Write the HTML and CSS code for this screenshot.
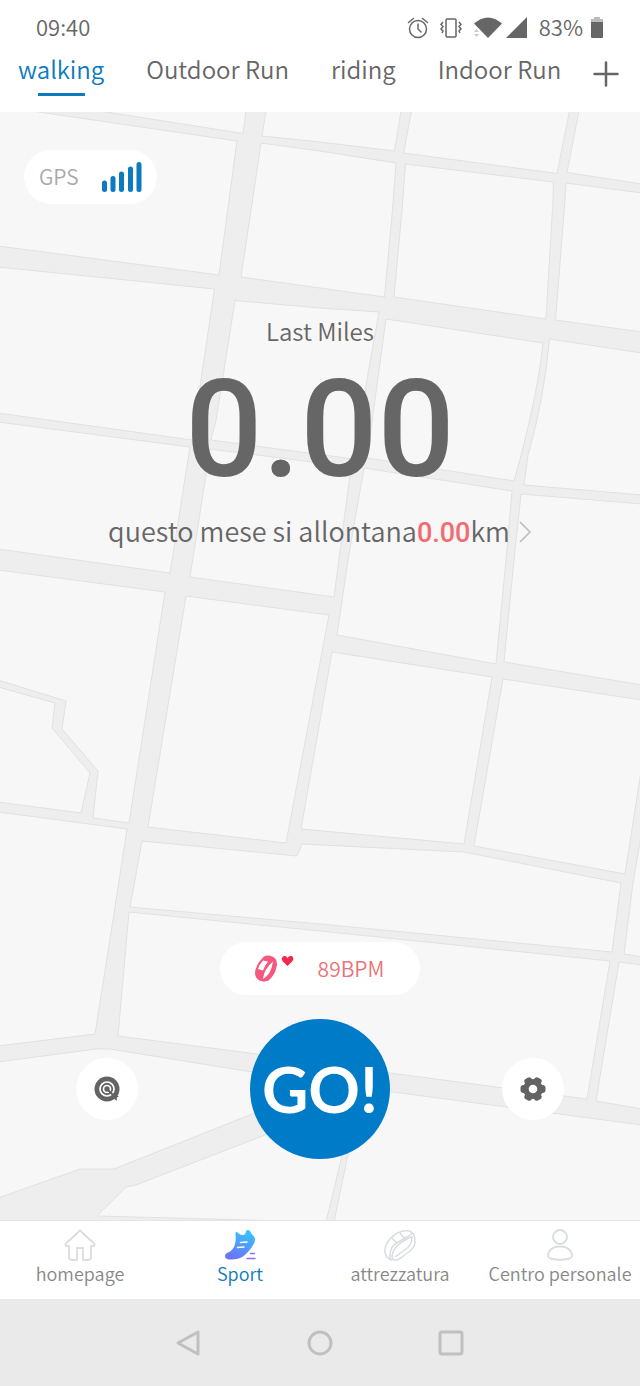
FILE: index.html
```html
<!DOCTYPE html>
<html lang="it">
<head>
<meta charset="utf-8">
<meta name="viewport" content="width=device-width, initial-scale=1">
<title>Sport</title>
<link rel="stylesheet" href="styles.css">
</head>
<body>
<div class="app">
  <header class="top">
    <div class="status">
      <time class="clock">09:40</time>
      <div class="status-icons">
        <svg width="22" height="24" viewBox="0 0 22 24" fill="none" stroke="#666" stroke-width="1.5" stroke-linecap="round"><circle cx="11" cy="13" r="8.5"/><path d="M11 8v5l3 3M1.500 6.500l5-4M20.500 6.500l-5-4"/></svg>
        <svg class="vibrate" width="22" height="24" viewBox="0 0 22 24" fill="none" stroke="#666" stroke-width="1.500"><rect x="6" y="3" width="10" height="18" rx="1"/><path d="M3 6l-2 2.500 2 2-2 2.500 2 2-1 2M19 6l2 2.500-2 2 2 2.500-2 2 1 2"/></svg>
        <svg class="wifi" width="30" height="24" viewBox="0 0 30 24" fill="#666"><path d="M1 7.500Q15-4.500 29 7.500L15 22Z"/><path d="M1 16l2.500-3L6 16zM1 18l2.500 3L6 18z" fill="#ccc"/></svg>
        <svg width="22" height="24" viewBox="0 0 22 24" fill="#666"><path d="M21 1v21H0z"/></svg>
        <span class="percent">83%</span>
        <svg width="14" height="24" viewBox="0 0 14 24"><path d="M4 1h6v2h3v3H1V3h3z" fill="#bbb"/><path d="M1 6h12v15q0 1-1 1H2q-1 0-1-1z" fill="#666"/></svg>
      </div>
    </div>
    <nav class="tabs" aria-label="Attività">
      <div class="tab-list">
        <a class="tab active" href="#walking">walking</a>
        <a class="tab" href="#outdoor">Outdoor Run</a>
        <a class="tab" href="#riding">riding</a>
        <a class="tab" href="#indoor">Indoor Run</a>
      </div>
      <button class="add" aria-label="Aggiungi"><svg width="26" height="26" viewBox="0 0 26 26" fill="none" stroke="#666" stroke-width="2.500" stroke-linecap="round"><path d="M13 1.500v23M1.500 13h23"/></svg></button>
    </nav>
  </header>

  <main class="stage">
    <svg class="map" viewBox="0 112 640 1108" preserveAspectRatio="xMidYMid slice" aria-hidden="true">
      <g fill="#f7f7f7" stroke="#e1e1e1" stroke-width="1">
        <path d="M100 111H246L243 133.500Z"/>
        <path d="M-2 111H32L237 141L229 200L219 275L-2 246Z"/>
        <path d="M266 111H401L394.500 151L320 142L262 136Z"/>
        <path d="M411.500 111H569.500L557 173.500L403.500 153Z"/>
        <path d="M579 111H642V184L567 172.500Z"/>
        <path d="M261 143L320 151L396 163L392.500 210L384.500 297L320 288L241 277L252.500 200Z"/>
        <path d="M405.500 164L553.500 182L553 200L546 319L394 297L402 210Z"/>
        <path d="M566 183L642 193V332L555.500 320L565 200Z"/>
        <path d="M-2 267L214.500 289L192 440L-2 413Z"/>
        <path d="M235 300.500L320 308L379 312L353 459L211 440L216 420Z"/>
        <path d="M386 319L543 343Q537 400 514 481L367 458Z"/>
        <path d="M549.500 339L642 353V495L524 485L528 455Q544 400 549.500 339Z"/>
        <path d="M-2 422L190 447L170 573L-2 549Z"/>
        <path d="M210 449L320 463L351 467L334 597L190 577Z"/>
        <path d="M364 468L512 491L506 560L496 664L337 635L348 560Z"/>
        <path d="M521 494L642 504V685L504 662L514 560Z"/>
        <path d="M-2 570L165 592L129 823L93 818L98 771L62 729L66 701L-2 680Z"/>
        <path d="M-2 687L55 703L52 728L90 773L81 813L-2 802Z"/>
        <path d="M186 596L329 615L286 843L148 827Z"/>
        <path d="M332 652L492 677L464 844L301 829Z"/>
        <path d="M503 679L642 700V765L625 874L474 846Z"/>
        <path d="M-2 812L127 829L113 920L95 1034L-2 1046Z"/>
        <path d="M142 841L297 856L302 844L464 852L621 883L612 952L320 924L130 907Z"/>
        <path d="M642 830L633 883L624 954L642 957Z"/>
        <path d="M129 912L320 931L610 961L587 1099L390 1073L257 1054L118 1036Z"/>
        <path d="M619 962L642 965V1109L596 1101Z"/>
        <path d="M-2 1062L96 1049H110L252 1072L345 1085L340 1082L252 1114L114 1169H80L-2 1198Z"/>
        <path d="M355 1087L642 1125V1222H334L350 1145Z"/>
        <path d="M265 1135L340 1110L342 1156L326 1222L97 1216L126 1187L136 1185Z"/>
      </g>
    </svg>

    <div class="gps">
      <span>GPS</span>
      <svg width="42" height="32" viewBox="0 0 42 32" stroke="#0b7abf" stroke-width="5" stroke-linecap="round"><path d="M3.500 22v6.500M12 17.500v11M20.500 13v15.500M29.500 8v20.500M38 3.500v25"/></svg>
    </div>

    <section class="summary">
      <h1 class="caption">Last Miles</h1>
      <p class="distance">0.00</p>
      <a class="month" href="#history"><span>questo mese si allontana<b class="red">0.00</b>km</span><svg width="14" height="24" viewBox="0 0 14 24" fill="none" stroke="#bbb" stroke-width="1.500"><path d="M2 2l10 10L2 22"/></svg></a>
    </section>

    <section class="controls">
      <div class="pulse">
        <svg width="40" height="30" viewBox="0 0 40 30"><path fill="#f4587f" fill-rule="evenodd" d="M10 2.500Q14 .5 18 2.500Q23 4 23 10Q22 19 17 24Q14 28 9 27.500Q2 26.500 1 20Q1 11 10 2.500ZM9 6.500Q5 11 4 15L9 16.500Q10.500 12 14 7.500ZM19 7.500Q10 15 9 25Q17 21 19 7.500Z"/><path fill="#f6274e" d="M33.500 12L28.500 7Q26.500 3 30 2Q32.500 1.500 33.500 4Q35 1.500 37.500 2Q40.500 3.500 38.500 7Z"/></svg>
        <span>89BPM</span>
      </div>
      <div class="actions">
        <button class="round" aria-label="Obiettivo"><svg width="28" height="28" viewBox="0 0 28 28"><circle cx="14" cy="14" r="12.500" fill="#636363"/><g fill="none" stroke="#fff" stroke-width="1.700"><circle cx="14" cy="14" r="7"/><circle cx="14" cy="14" r="3.500"/></g><path d="M14 14l6 6" stroke="#636363" stroke-width="2"/><path d="M20 20l6 1-2 1.500-.5 3.500-3-3z" fill="#636363"/></svg></button>
        <button class="go">GO!</button>
        <button class="round" aria-label="Impostazioni"><svg width="28" height="28" viewBox="0 0 28 28"><g fill="#636363"><circle cx="14" cy="14" r="10"/><rect x="1.500" y="10" width="25" height="8" rx="3"/><rect x="1.500" y="10" width="25" height="8" rx="3" transform="rotate(60 14 14)"/><rect x="1.500" y="10" width="25" height="8" rx="3" transform="rotate(120 14 14)"/></g><circle cx="14" cy="14" r="4.300" fill="#fff"/></svg></button>
      </div>
    </section>
  </main>

  <nav class="bottom" aria-label="Principale">
    <a class="item" href="#home"><svg width="32" height="32" viewBox="0 0 32 32" fill="none" stroke="#ddd" stroke-width="1.800" stroke-linejoin="round"><path d="M16 1.500L1.500 15Q1 17 3 17H5V28Q5 31 8 31H13V19H19V31H24Q27 31 27 28V17H29Q31 17 30.500 15Z"/></svg><span>homepage</span></a>
    <a class="item current" href="#sport"><svg width="32" height="32" viewBox="0 0 32 32"><defs><linearGradient id="shoe" x1="0.700" y1="0" x2="0.400" y2="1"><stop offset="0" stop-color="#35c5ff"/><stop offset="1" stop-color="#6d73fa"/></linearGradient></defs><path fill="url(#shoe)" d="M11.500 5Q11.500 1 14 4Q17 7 20.500 5.500Q22 4 22 2Q24 0 26 2Q27 5 30 7.500Q32 10 30 14.500Q26 22 19 27.500Q14 31 5 30.500Q1 30 1 27Q1 24.500 4 23.500Q13 20 11.500 5Z"/><path d="M16.500 13.500l6.500-.5M13.500 18.500l6.500-.5" stroke="#fff" stroke-width="1.500" stroke-linecap="round"/><path d="M26.500 24.500h4M23 29.500h8" stroke="#8175ee" stroke-width="1.500" stroke-linecap="round"/></svg><span>Sport</span></a>
    <a class="item" href="#device"><svg width="32" height="32" viewBox="0 0 32 32" fill="none" stroke="#d9dcdf" stroke-width="1.500"><path d="M23 1.500Q13 2 6 10Q-1 18 1.500 25Q3 30 8 31M23 1.500Q28 2 27.500 5Q27 6 21 9L11 15Q5 20 6 30M8 9L13 14M16 4L20 9M28 4Q31 5 31 13Q31 18 25 23L15 30Q9 33 8 28Q8 22 14 16Q23 9 28 8Q28 16 22 20L11 28"/></svg><span>attrezzatura</span></a>
    <a class="item" href="#profile"><svg width="32" height="32" viewBox="0 0 32 32" fill="none" stroke="#d9dcdf" stroke-width="1.800"><circle cx="16" cy="8" r="7"/><path d="M16 17.500Q24 17.500 27 23Q30 29 24 30Q16 31.500 8 30Q2 29 5 23Q8 17.500 16 17.500Z"/></svg><span>Centro personale</span></a>
  </nav>

  <footer class="system">
    <button aria-label="Indietro"><svg width="28" height="28" viewBox="0 0 28 28"><path d="M3 14L23 3V25Z"/></svg></button>
    <button aria-label="Home"><svg width="28" height="28" viewBox="0 0 28 28"><circle cx="14" cy="14" r="11"/></svg></button>
    <button aria-label="Recenti"><svg width="28" height="28" viewBox="0 0 28 28"><rect x="3" y="3" width="22" height="22" rx="2"/></svg></button>
  </footer>
</div>
</body>
</html>
```

FILE: styles.css
```css
* { box-sizing: border-box; }
body { margin: 0; background: #fff; color: #666; font-family: "Noto Sans CJK SC", "Noto Sans", sans-serif; font-weight: 350; }
a { color: inherit; text-decoration: none; }
button { border: 0; padding: 0; background: none; font: inherit; color: inherit; cursor: pointer; }
svg { display: block; flex: none; }
h1, p { margin: 0; font-weight: inherit; }

.app { display: flex; flex-direction: column; min-height: 100vh; }

.top { display: flex; flex-direction: column; height: 112px; background: #fff; }
.status { display: flex; justify-content: space-between; align-items: center; height: 48px; padding: 6px 36px 0; font-size: 22px; line-height: 28px; }
.clock { padding-bottom: 2px; }
.status-icons { display: flex; align-items: center; gap: 11px; }
.status-icons svg { margin-top: 2px; }
.wifi { margin-right: -8px; }
.percent { margin-right: -4px; padding-bottom: 2px; }
.tabs { display: flex; justify-content: space-between; align-items: flex-start; padding: 3px 21px 0 18px; font-size: 24px; line-height: 36px; white-space: nowrap; }
.tab-list { display: flex; gap: 42px; }
.tab { display: flex; flex-direction: column; align-items: center; gap: 6px; }
.tab.active { color: #0b7abf; }
.tab.active::after { content: ""; width: 47px; height: 3px; background: #0b7abf; }
.add { padding-top: 10px; }

.stage { position: relative; flex: 1; display: flex; flex-direction: column; justify-content: space-between; padding: 38px 24px 61px; background: #eee; overflow: hidden; }
.map { position: absolute; inset: 0; width: 100%; height: 100%; }
.gps, .summary, .controls { position: relative; }
.gps { display: flex; align-items: center; align-self: flex-start; gap: 22px; height: 54px; padding: 0 14px 0 15px; border-radius: 27px; background: #fff; color: #aaa; font-size: 21px; }
.gps span, .pulse span { padding-bottom: 2px; }
.summary { display: flex; flex-direction: column; align-items: center; flex: 1; padding-top: 109px; }
.caption { font-size: 24px; line-height: 36px; }
.distance { font: 500 136px/162px Roboto, sans-serif; }
.month { display: flex; align-items: center; gap: 8px; font-size: 27px; line-height: 40px; }
.red { color: #f26b70; font-family: Roboto, sans-serif; font-weight: 500; }
.controls { display: flex; flex-direction: column; align-items: center; gap: 24px; }
.pulse { display: flex; align-items: center; gap: 24px; height: 53px; padding: 0 36px 0 34px; border-radius: 27px; background: #fff; color: #e97478; font-size: 21px; }
.actions { display: flex; justify-content: space-between; align-items: center; align-self: stretch; padding: 0 52px; }
.round { display: grid; place-items: center; width: 62px; height: 62px; border-radius: 50%; background: #fff; }
.go { width: 140px; height: 140px; border-radius: 50%; background: #007bc8; color: #fff; font: 700 64px/1 Lato, sans-serif; }

.bottom { display: grid; grid-template-columns: repeat(4, 1fr); height: 79px; padding-top: 8px; border-top: 1px solid #e4e4e4; background: #fff; }
.item { display: flex; flex-direction: column; align-items: center; color: #888; font-size: 18px; line-height: 24px; white-space: nowrap; }
.item.current { color: #0b7abf; }

.system { display: flex; justify-content: center; align-items: center; gap: 103px; height: 87px; background: #eaeaea; }
.system svg { fill: none; stroke: #c0c0c0; stroke-width: 3; stroke-linejoin: round; }
```
